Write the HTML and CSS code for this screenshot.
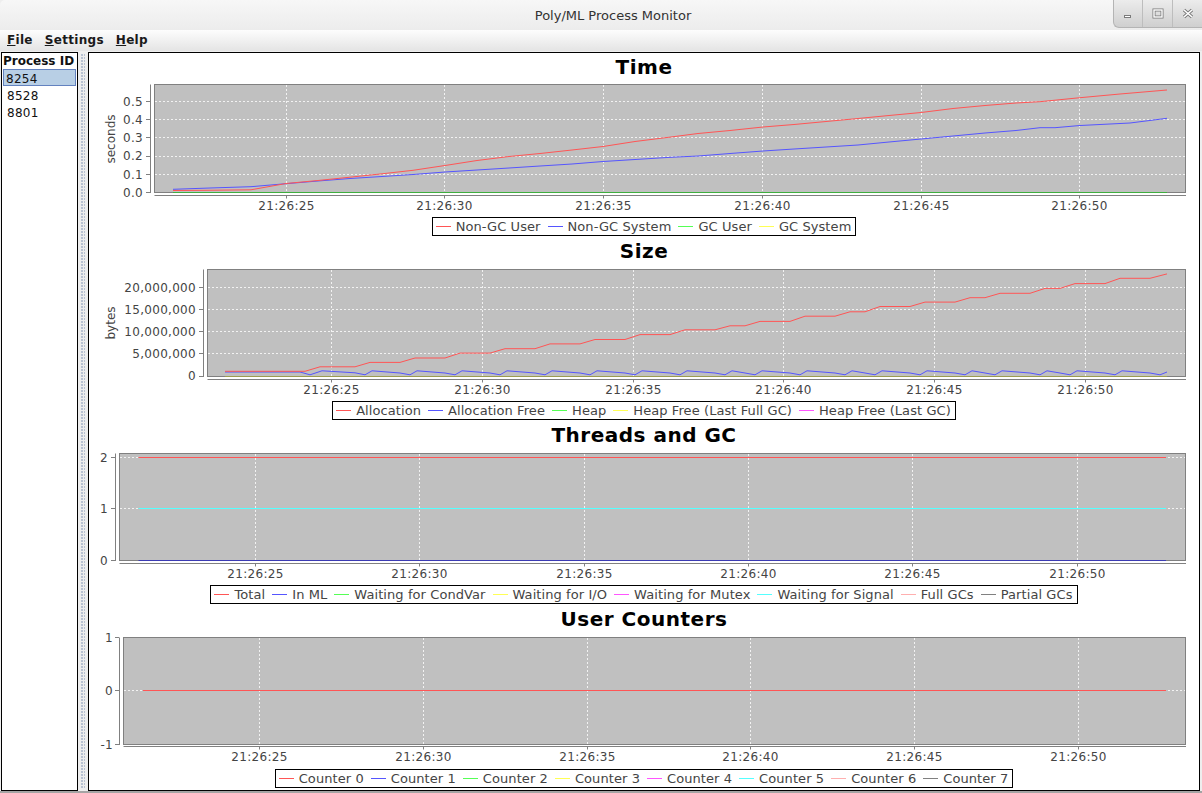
FILE: index.html
```html
<!DOCTYPE html>
<html>
<head>
<meta charset="utf-8">
<title>Poly/ML Process Monitor</title>
<link rel="stylesheet" href="styles.css">
</head>
<body>
<div class="window">
  <header class="titlebar">
    <div class="tb-spacer"></div>
    <div class="tb-title">Poly/ML Process Monitor</div>
    <div class="tb-buttons">
      <div class="wb"><svg width="12" height="12" viewBox="0 0 12 12"><rect class="ico" x="2.5" y="7.5" width="6" height="2"/></svg></div>
      <div class="wb"><svg width="12" height="12" viewBox="0 0 12 12"><rect x="2" y="2" width="8" height="7" fill="none" stroke="#7a7a7a" stroke-width="3"/><rect x="2" y="2" width="8" height="7" fill="none" stroke="#fff" stroke-width="1.4"/></svg></div>
      <div class="wb"><svg width="12" height="12" viewBox="0 0 12 12"><path d="M2 2L10 9M10 2L2 9" stroke="#7a7a7a" stroke-width="3.4"/><path d="M2 2L10 9M10 2L2 9" stroke="#fff" stroke-width="1.6"/></svg></div>
    </div>
  </header>
  <nav class="menubar">
    <span class="menu"><u>F</u>ile</span>
    <span class="menu"><u>S</u>ettings</span>
    <span class="menu"><u>H</u>elp</span>
  </nav>
  <main class="content">
    <aside class="pidlist">
      <div class="pidhead">Process ID</div>
      <div class="pid selected">8254</div>
      <div class="pid">8528</div>
      <div class="pid">8801</div>
    </aside>
    <div class="splitter"></div>
    <div class="charts">

      <section class="chart">
        <h2>Time</h2>
        <svg class="plot" viewBox="89 81 1110 136" width="1110" height="136">
          <text class="ylab" transform="translate(114.5 139) rotate(-90)" text-anchor="middle">seconds</text>
          <g class="tl" text-anchor="end">
            <text x="143" y="106">0.5</text>
            <text x="143" y="124">0.4</text>
            <text x="143" y="142.2">0.3</text>
            <text x="143" y="160.4">0.2</text>
            <text x="143" y="178.5">0.1</text>
            <text x="143" y="196.6">0.0</text>
          </g>
          <path class="axis" d="M150.5 84.5V193M146 101.5h4M146 119.5h4M146 137.5h4M146 156.5h4M146 174.5h4M146 192.5h4"/>
          <rect class="plotbg" x="154.5" y="84.5" width="1031" height="108"/>
          <path class="grid" d="M155 101.5H1185M155 119.5H1185M155 137.5H1185M155 156.5H1185M155 174.5H1185M286.5 85V192M444.5 85V192M603.5 85V192M762.5 85V192M921.5 85V192M1079.5 85V192"/>
          <polyline class="ln s1" points="173,189.3 210,188 251,186.7 286,183.7 318,181 350,178.5 382,176.5 413,174.5 445,172 477,170 509,168 540,166 572,164 603,161.5 635,159.5 667,157.5 698,156 730,153.5 763,151 794,149 826,147 858,145 889,142 921,139 953,136 985,133 1016,130.5 1040,127.7 1055,127.7 1080,125.5 1130,123 1167,118.3"/>
          <polyline class="ln s0" points="173,190.5 205,190.3 251,189.8 286,183.5 318,180.5 350,177.2 382,173.8 413,170.3 445,165.5 477,160.5 509,156.5 540,153.5 572,150 603,146.5 635,141.5 667,137.5 698,133.5 730,130.5 763,127 794,124.5 826,121.5 858,118.5 889,115.5 921,112.5 953,108.5 985,105.5 1016,103 1040,101.7 1080,97.7 1120,94 1167,90"/>
          <rect class="outline" x="154.5" y="84.5" width="1031" height="108"/>
          <path class="ln zg" d="M173 192.5H1167"/>
          <path class="axis" d="M154.5 195.5H1186M286.5 195.5v3M444.5 195.5v3M603.5 195.5v3M762.5 195.5v3M921.5 195.5v3M1079.5 195.5v3"/>
          <g class="tl" text-anchor="middle">
            <text x="286.5" y="209.5">21:26:25</text>
            <text x="444.5" y="209.5">21:26:30</text>
            <text x="603.5" y="209.5">21:26:35</text>
            <text x="762.5" y="209.5">21:26:40</text>
            <text x="921.5" y="209.5">21:26:45</text>
            <text x="1079.5" y="209.5">21:26:50</text>
          </g>
        </svg>
        <div class="legend">
          <span class="item c0">Non-GC User</span>
          <span class="item c1">Non-GC System</span>
          <span class="item c2">GC User</span>
          <span class="item c3">GC System</span>
        </div>
      </section>

      <section class="chart">
        <h2>Size</h2>
        <svg class="plot" viewBox="89 265 1110 136" width="1110" height="136">
          <text class="ylab" transform="translate(114.5 323) rotate(-90)" text-anchor="middle">bytes</text>
          <g class="tl" text-anchor="end">
            <text x="196" y="292.3">20,000,000</text>
            <text x="196" y="314.3">15,000,000</text>
            <text x="196" y="336.3">10,000,000</text>
            <text x="196" y="358.3">5,000,000</text>
            <text x="196" y="380.3">0</text>
          </g>
          <path class="axis" d="M203.5 269.5V377M199 287.5h4M199 309.5h4M199 331.5h4M199 353.5h4M199 376.5h4"/>
          <rect class="plotbg" x="207.5" y="269.5" width="978" height="107"/>
          <path class="grid" d="M208 287.5H1185M208 309.5H1185M208 331.5H1185M208 353.5H1185M331.5 270V376M482.5 270V376M633.5 270V376M783.5 270V376M934.5 270V376M1085.5 270V376"/>
          <polyline class="ln s1" points="225,372 300,372 310,374.8 322,370.8 355,372.8 365,374.8 372,370.8 400,373 410,374.8 417,370.8 445,373 455,374.8 462,370.8 490,373 500,374.8 507,370.8 535,373 545,374.8 552,370.8 580,373 590,374.8 597,370.8 625,373 635,374.8 642,370.8 670,373 680,374.8 687,370.8 715,373 725,374.8 732,370.8 745,373 755,374.8 762,370.8 790,373 800,374.8 807,370.8 835,373 845,374.8 852,370.8 865,373 875,374.8 882,370.8 910,373 920,374.8 927,370.8 955,373 965,374.8 972,370.8 985,373 995,374.8 1002,370.8 1030,373 1040,374.8 1047,370.8 1060,373 1070,374.8 1077,370.8 1105,373 1115,374.8 1122,370.8 1150,373 1160,374.8 1167,372"/>
          <polyline class="ln s0" points="225,371.3 305,371.3 320,366.8 355,366.8 370,362.4 400,362.4 415,358 445,358 460,353.1 490,353.1 505,348.7 535,348.7 550,343.9 580,343.9 595,339.5 625,339.5 640,334.6 670,334.6 685,329.8 715,329.8 730,325.8 745,325.8 760,321.4 790,321.4 805,316.2 835,316.2 850,311.8 865,311.8 880,306.5 910,306.5 925,302.1 955,302.1 970,297.7 985,297.7 1000,293.3 1030,293.3 1045,288.4 1060,288.4 1075,283.6 1105,283.6 1120,278.3 1150,278.3 1167,273.9"/>
          <rect class="outline" x="207.5" y="269.5" width="978" height="107"/>
          <path class="ln zo" d="M225 376.5H1167"/>
          <path class="axis" d="M207.5 379.5H1186M331.5 379.5v3M482.5 379.5v3M633.5 379.5v3M783.5 379.5v3M934.5 379.5v3M1085.5 379.5v3"/>
          <g class="tl" text-anchor="middle">
            <text x="331.5" y="393.5">21:26:25</text>
            <text x="482.5" y="393.5">21:26:30</text>
            <text x="633.5" y="393.5">21:26:35</text>
            <text x="783.5" y="393.5">21:26:40</text>
            <text x="934.5" y="393.5">21:26:45</text>
            <text x="1085.5" y="393.5">21:26:50</text>
          </g>
        </svg>
        <div class="legend">
          <span class="item c0">Allocation</span>
          <span class="item c1">Allocation Free</span>
          <span class="item c2">Heap</span>
          <span class="item c3">Heap Free (Last Full GC)</span>
          <span class="item c4">Heap Free (Last GC)</span>
        </div>
      </section>

      <section class="chart">
        <h2>Threads and GC</h2>
        <svg class="plot" viewBox="89 449 1110 136" width="1110" height="136">
          <g class="tl" text-anchor="end">
            <text x="108" y="462">2</text>
            <text x="108" y="513">1</text>
            <text x="108" y="564.5">0</text>
          </g>
          <path class="axis" d="M115.5 453.5V561M111 457.5h4M111 508.5h4M111 560.5h4"/>
          <rect class="plotbg" x="119.5" y="453.5" width="1066" height="107"/>
          <path class="grid" d="M120 457.5H1185M120 508.5H1185M255.5 454V560M419.5 454V560M584.5 454V560M748.5 454V560M912.5 454V560M1077.5 454V560"/>
          <path class="ln s5" d="M138.5 508.5H1166"/>
          <path class="ln s0" d="M138.5 457.5H1166"/>
          <rect class="outline" x="119.5" y="453.5" width="1066" height="107"/>
          <path class="ln zb" d="M138.5 560.5H1166"/>
          <path class="axis" d="M119.5 563.5H1186M255.5 563.5v3M419.5 563.5v3M584.5 563.5v3M748.5 563.5v3M912.5 563.5v3M1077.5 563.5v3"/>
          <g class="tl" text-anchor="middle">
            <text x="255.5" y="577.5">21:26:25</text>
            <text x="419.5" y="577.5">21:26:30</text>
            <text x="584.5" y="577.5">21:26:35</text>
            <text x="748.5" y="577.5">21:26:40</text>
            <text x="912.5" y="577.5">21:26:45</text>
            <text x="1077.5" y="577.5">21:26:50</text>
          </g>
        </svg>
        <div class="legend">
          <span class="item c0">Total</span>
          <span class="item c1">In ML</span>
          <span class="item c2">Waiting for CondVar</span>
          <span class="item c3">Waiting for I/O</span>
          <span class="item c4">Waiting for Mutex</span>
          <span class="item c5">Waiting for Signal</span>
          <span class="item c6">Full GCs</span>
          <span class="item c7">Partial GCs</span>
        </div>
      </section>

      <section class="chart">
        <h2>User Counters</h2>
        <svg class="plot" viewBox="89 633 1110 136" width="1110" height="136">
          <g class="tl" text-anchor="end">
            <text x="113" y="642">1</text>
            <text x="113" y="695">0</text>
            <text x="113" y="748.5">-1</text>
          </g>
          <path class="axis" d="M119.5 637.5V745M115 637.5h4M115 690.5h4M115 744.5h4"/>
          <rect class="plotbg" x="123.5" y="637.5" width="1062" height="107"/>
          <path class="grid" d="M124 690.5H1185M259.5 638V744M423.5 638V744M587.5 638V744M750.5 638V744M914.5 638V744M1078.5 638V744"/>
          <path class="ln s0" d="M143 690.5H1166"/>
          <rect class="outline" x="123.5" y="637.5" width="1062" height="107"/>
          <path class="axis" d="M123.5 746.5H1186M259.5 746.5v3M423.5 746.5v3M587.5 746.5v3M750.5 746.5v3M914.5 746.5v3M1078.5 746.5v3"/>
          <g class="tl" text-anchor="middle">
            <text x="259.5" y="760.5">21:26:25</text>
            <text x="423.5" y="760.5">21:26:30</text>
            <text x="587.5" y="760.5">21:26:35</text>
            <text x="750.5" y="760.5">21:26:40</text>
            <text x="914.5" y="760.5">21:26:45</text>
            <text x="1078.5" y="760.5">21:26:50</text>
          </g>
        </svg>
        <div class="legend">
          <span class="item c0">Counter 0</span>
          <span class="item c1">Counter 1</span>
          <span class="item c2">Counter 2</span>
          <span class="item c3">Counter 3</span>
          <span class="item c4">Counter 4</span>
          <span class="item c5">Counter 5</span>
          <span class="item c6">Counter 6</span>
          <span class="item c7">Counter 7</span>
        </div>
      </section>

    </div>
  </main>
</div>
</body>
</html>
```
FILE: styles.css
```css
* { box-sizing: border-box; }
html, body { margin: 0; padding: 0; }
body {
  width: 1202px;
  height: 793px;
  overflow: hidden;
  background: #eeeeee;
  font-family: "DejaVu Sans", "Liberation Sans", sans-serif;
}
.window {
  width: 1202px;
  height: 793px;
  display: flex;
  flex-direction: column;
  background: #eeeeee;
  border-bottom: 2px solid #a4a4a4;
}

/* title bar */
.titlebar {
  flex: none;
  height: 30px;
  display: grid;
  grid-template-columns: 1fr auto 1fr;
  align-items: center;
  background: linear-gradient(#f7f7f7, #ececec);
  border-top-left-radius: 5px;
}
.tb-title {
  font-size: 13px;
  color: #333;
  padding-top: 1px;
  margin-left: 24px;
}
.tb-buttons {
  justify-self: end;
  align-self: start;
  display: flex;
  height: 28px;
  background: linear-gradient(#ececec, #cfcfcf);
  border-left: 1px solid #b4b4b4;
  border-bottom: 1px solid #b4b4b4;
  border-bottom-left-radius: 6px;
  overflow: hidden;
}
.wb {
  width: 30px;
  display: flex;
  align-items: center;
  justify-content: center;
  border-left: 1px solid #bdbdbd;
}
.wb:first-child { border-left: none; width: 28px; }
.ico { fill: #fff; stroke: #7a7a7a; stroke-width: 1; }

/* menu bar */
.menubar {
  flex: none;
  height: 21px;
  display: flex;
  padding-left: 1px;
  background: linear-gradient(#fdfdfd, #e4e4e4);
  font-size: 12px;
  font-weight: bold;
  color: #1a1a1a;
}
.menu {
  padding: 0 6px;
  line-height: 21px;
  letter-spacing: 0.3px;
}
.menu u { text-underline-offset: 1px; }

/* content */
.content {
  flex: 1;
  display: flex;
  padding: 1px 2px 0 1px;
  min-height: 0;
}
.pidlist {
  width: 77px;
  flex: none;
  border: 1px solid #000;
  background: #fff;
  font-size: 12px;
  color: #111;
}
.pidhead {
  height: 16px;
  line-height: 17px;
  padding-left: 1px;
  font-weight: bold;
}
.pid {
  height: 17px;
  padding: 3px 0 0 4px;
  line-height: 14px;
  margin: 0 1px;
  letter-spacing: 0.3px;
}
.pid.selected {
  background: #b8cfe5;
  border: 1px solid #6382bf;
  padding: 2px 0 0 2px;
}
.splitter {
  width: 10px;
  flex: none;
  display: flex;
  justify-content: center;
  padding: 2px 0;
}
.splitter::before {
  content: "";
  width: 4px;
  background-image: radial-gradient(circle at 1px 1px, #9aa9c2 0.6px, transparent 0.9px);
  background-size: 3px 3px;
}
.charts {
  width: 1112px;
  flex: none;
  border: 1px solid #000;
  background: #fff;
  display: flex;
  flex-direction: column;
}

/* charts */
.chart {
  height: 184px;
  flex: none;
  display: flex;
  flex-direction: column;
  align-items: center;
}
.chart h2 {
  margin: 0;
  height: 28px;
  line-height: 28px;
  font-size: 20px;
  letter-spacing: 0.5px;
  font-weight: bold;
  color: #000;
}
.plot {
  display: block;
  flex: none;
  width: 1110px;
  height: 136px;
  overflow: visible;
}
.tl, .ylab {
  font-family: "DejaVu Sans", sans-serif;
  font-size: 12px;
  fill: #444;
}
.tl { letter-spacing: 0.3px; }
.plotbg { fill: #c0c0c0; }
.outline { fill: none; stroke: #808080; stroke-width: 1; }
.axis { fill: none; stroke: #808080; stroke-width: 1; }
.grid { fill: none; stroke: #f2f2f2; stroke-width: 1; stroke-dasharray: 2 2; }
.ln { fill: none; stroke-width: 1; }
.s0 { stroke: #ff5555; }
.s1 { stroke: #5555ff; }
.s5 { stroke: #55ffff; }
.zg { stroke: #3fae3f; }
.zo { stroke: #9c9c50; }
.zb { stroke: #3c3cb4; }

/* legend */
.legend {
  flex: none;
  display: flex;
  align-items: center;
  gap: 7px;
  height: 19px;
  margin-bottom: 1px;
  padding: 0 4px 0 3px;
  border: 1px solid #000;
  font-size: 13px;
  letter-spacing: 0.08px;
  color: #444;
  white-space: nowrap;
}
.item {
  display: flex;
  align-items: center;
}
.item::before {
  content: "";
  width: 15px;
  height: 1px;
  margin-right: 5px;
  background: #ff5555;
}
.c0::before { background: #ff5555; }
.c1::before { background: #5555ff; }
.c2::before { background: #55ff55; }
.c3::before { background: #ffff55; }
.c4::before { background: #ff55ff; }
.c5::before { background: #55ffff; }
.c6::before { background: #ffafaf; }
.c7::before { background: #808080; }
```
